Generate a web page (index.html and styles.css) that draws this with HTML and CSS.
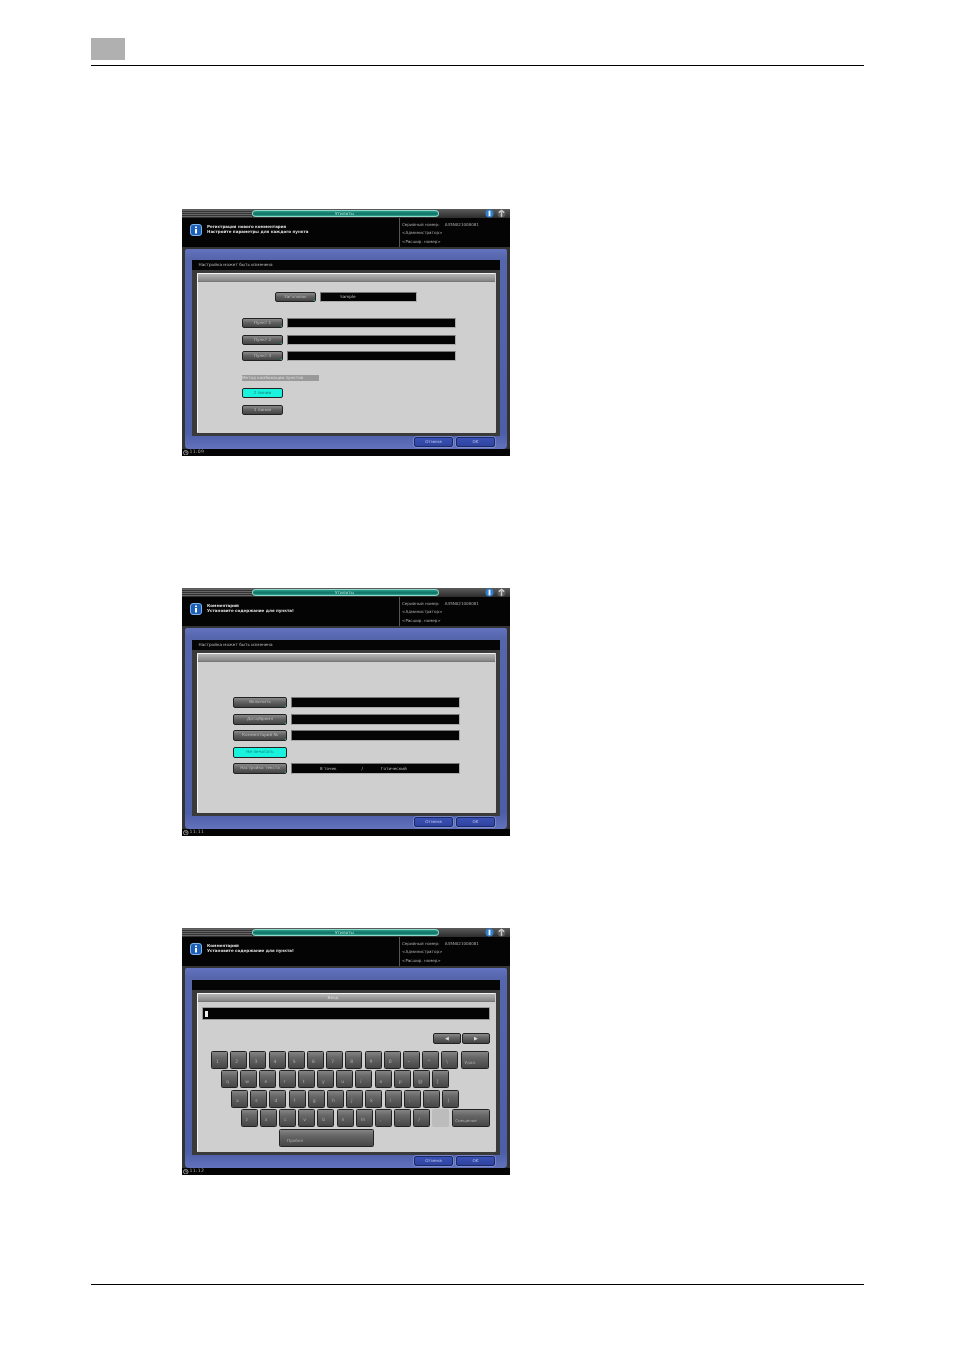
FILE: index.html
```html
<!DOCTYPE html>
<html lang="ru">
<head>
<meta charset="utf-8">
<title>Утилиты</title>
<link rel="stylesheet" href="styles.css">
</head>
<body>
<div class="page">
  <header class="page-head"><div class="chapter"></div></header>

  <section class="screen s1">
    <div class="topbar"><div class="stripes"></div><div class="pill">Утилиты</div><div class="top-icons"><svg class="ic" viewBox="0 0 10 10"><circle cx="5" cy="5" r="4.5" fill="#2f7fd0"/><rect x="4" y="2" width="2" height="6" fill="#fff"/></svg><svg class="ic" viewBox="0 0 10 10"><circle cx="5" cy="5" r="4.5" fill="#5c5c5c"/><path d="M2 4 L5 1.5 L8 4 M5 3 V8.5" stroke="#ccc" stroke-width="1.6" fill="none"/></svg></div></div>
    <div class="info">
      <svg class="info-ic" viewBox="0 0 12 12"><rect x=".5" y=".5" width="11" height="11" rx="2.5" fill="#1c5fb8" stroke="#7fb2ea"/><rect x="5" y="2.5" width="2" height="1.6" fill="#fff"/><rect x="5" y="5" width="2" height="4.5" fill="#fff"/></svg>
      <div class="msg"><p>Регистрация нового комментария</p><p>Настройте параметры для каждого пункта</p></div>
      <div class="meta"><p>Серийный номер: <span class="serial">A45N021008081</span></p><p>&lt;Администратор&gt;</p><p>&lt;Расшир. номер&gt;</p></div>
    </div>
    <div class="panel">
      <div class="title">Настройка может быть изменена</div>
      <div class="frame"><div class="content">
        <div class="strip"></div>
        <div class="row head-row"><div class="btn w41">Заголовок</div><div class="field w96 sample">Sample</div></div>
        <div class="group-a">
          <div class="row"><div class="btn w41">Пункт 1</div><div class="field w168"></div></div>
          <div class="row"><div class="btn w41">Пункт 2</div><div class="field w168"></div></div>
          <div class="row"><div class="btn w41">Пункт 3</div><div class="field w168"></div></div>
        </div>
        <div class="combo-label">Метод комбинации пунктов</div>
        <div class="combo">
          <div class="btn w41 on plain">2 линии</div>
          <div class="btn w41 plain">1 линия</div>
        </div>
      </div></div>
      <div class="foot"><div class="fbtn">Отмена</div><div class="fbtn">OK</div></div>
    </div>
    <div class="status"><svg class="clock" viewBox="0 0 6 6"><circle cx="3" cy="3" r="2.5" fill="none" stroke="#ccc" stroke-width=".8"/><path d="M3 1.5V3H4.5" stroke="#ccc" stroke-width=".7" fill="none"/></svg>11:09</div>
  </section>

  <section class="screen s2">
    <div class="topbar"><div class="stripes"></div><div class="pill">Утилиты</div><div class="top-icons"><svg class="ic" viewBox="0 0 10 10"><circle cx="5" cy="5" r="4.5" fill="#2f7fd0"/><rect x="4" y="2" width="2" height="6" fill="#fff"/></svg><svg class="ic" viewBox="0 0 10 10"><circle cx="5" cy="5" r="4.5" fill="#5c5c5c"/><path d="M2 4 L5 1.5 L8 4 M5 3 V8.5" stroke="#ccc" stroke-width="1.6" fill="none"/></svg></div></div>
    <div class="info">
      <svg class="info-ic" viewBox="0 0 12 12"><rect x=".5" y=".5" width="11" height="11" rx="2.5" fill="#1c5fb8" stroke="#7fb2ea"/><rect x="5" y="2.5" width="2" height="1.6" fill="#fff"/><rect x="5" y="5" width="2" height="4.5" fill="#fff"/></svg>
      <div class="msg"><p>Комментарий</p><p>Установите содержание для пункта!</p></div>
      <div class="meta"><p>Серийный номер: <span class="serial">A45N021008081</span></p><p>&lt;Администратор&gt;</p><p>&lt;Расшир. номер&gt;</p></div>
    </div>
    <div class="panel">
      <div class="title">Настройка может быть изменена</div>
      <div class="frame"><div class="content">
        <div class="strip"></div>
        <div class="group-b">
          <div class="row"><div class="btn w54">Включить</div><div class="field w168"></div></div>
          <div class="row"><div class="btn w54">Дата/Время</div><div class="field w168"></div></div>
          <div class="row"><div class="btn w54">Комментарий №</div><div class="field w168"></div></div>
          <div class="row"><div class="btn w54 on plain">Не печатать</div></div>
          <div class="row"><div class="btn w54">Настройка текста</div><div class="field w168 font-info"><span>8 точек</span><span>/</span><span>Готический</span></div></div>
        </div>
      </div></div>
      <div class="foot"><div class="fbtn">Отмена</div><div class="fbtn">OK</div></div>
    </div>
    <div class="status"><svg class="clock" viewBox="0 0 6 6"><circle cx="3" cy="3" r="2.5" fill="none" stroke="#ccc" stroke-width=".8"/><path d="M3 1.5V3H4.5" stroke="#ccc" stroke-width=".7" fill="none"/></svg>11:11</div>
  </section>

  <section class="screen s3">
    <div class="topbar"><div class="stripes"></div><div class="pill">Утилиты</div><div class="top-icons"><svg class="ic" viewBox="0 0 10 10"><circle cx="5" cy="5" r="4.5" fill="#2f7fd0"/><rect x="4" y="2" width="2" height="6" fill="#fff"/></svg><svg class="ic" viewBox="0 0 10 10"><circle cx="5" cy="5" r="4.5" fill="#5c5c5c"/><path d="M2 4 L5 1.5 L8 4 M5 3 V8.5" stroke="#ccc" stroke-width="1.6" fill="none"/></svg></div></div>
    <div class="info">
      <svg class="info-ic" viewBox="0 0 12 12"><rect x=".5" y=".5" width="11" height="11" rx="2.5" fill="#1c5fb8" stroke="#7fb2ea"/><rect x="5" y="2.5" width="2" height="1.6" fill="#fff"/><rect x="5" y="5" width="2" height="4.5" fill="#fff"/></svg>
      <div class="msg"><p>Комментарий</p><p>Установите содержание для пункта!</p></div>
      <div class="meta"><p>Серийный номер: <span class="serial">A45N021008081</span></p><p>&lt;Администратор&gt;</p><p>&lt;Расшир. номер&gt;</p></div>
    </div>
    <div class="panel">
      <div class="title"></div>
      <div class="frame"><div class="content">
        <div class="strip">Ввод</div>
        <div class="input"><span class="caret"></span></div>
        <div class="arrows"><div class="arrow">◀</div><div class="arrow">▶</div></div>
        <div class="keyboard">
          <div class="krow r1"><div class="key">1</div><div class="key">2</div><div class="key">3</div><div class="key">4</div><div class="key">5</div><div class="key">6</div><div class="key">7</div><div class="key">8</div><div class="key">9</div><div class="key">0</div><div class="key">-</div><div class="key">^</div><div class="key">\</div><div class="key wide">Удал.</div></div>
          <div class="krow r2"><div class="key">q</div><div class="key">w</div><div class="key">e</div><div class="key">r</div><div class="key">t</div><div class="key">y</div><div class="key">u</div><div class="key">i</div><div class="key">o</div><div class="key">p</div><div class="key">@</div><div class="key">[</div></div>
          <div class="krow r3"><div class="key">a</div><div class="key">s</div><div class="key">d</div><div class="key">f</div><div class="key">g</div><div class="key">h</div><div class="key">j</div><div class="key">k</div><div class="key">l</div><div class="key">;</div><div class="key">:</div><div class="key">]</div></div>
          <div class="krow r4"><div class="key">z</div><div class="key">x</div><div class="key">c</div><div class="key">v</div><div class="key">b</div><div class="key">n</div><div class="key">m</div><div class="key">,</div><div class="key">.</div><div class="key">/</div><div class="key blank"></div><div class="key shift">Смещение</div></div>
          <div class="krow r5"><div class="key space">Пробел</div></div>
        </div>
      </div></div>
      <div class="foot"><div class="fbtn">Отмена</div><div class="fbtn">OK</div></div>
    </div>
    <div class="status"><svg class="clock" viewBox="0 0 6 6"><circle cx="3" cy="3" r="2.5" fill="none" stroke="#ccc" stroke-width=".8"/><path d="M3 1.5V3H4.5" stroke="#ccc" stroke-width=".7" fill="none"/></svg>11:12</div>
  </section>

  <footer class="page-foot"></footer>
</div>
</body>
</html>
```
FILE: styles.css
```css
* { box-sizing: border-box; }
html, body { margin: 0; padding: 0; background: #fff; }
p { margin: 0; }
.page { width: 954px; height: 1350px; padding-top: 38px; overflow: hidden; font-family: "DejaVu Sans", sans-serif; }

.page-head { margin: 0 90px 0 91px; height: 28px; border-bottom: 1px solid #000; }
.chapter { width: 34px; height: 22px; background: #b0b0b0; }
.page-foot { margin: 109px 90px 0 91px; height: 1px; background: #000; }

.screen { width: 328px; margin-left: 182px; display: flex; flex-direction: column; background: #333; font-size: 4.2px; line-height: 1; color: #ccc; filter: blur(.35px); }
.s1 { height: 247px; margin-top: 143px; }
.s2 { height: 248px; margin-top: 132px; }
.s3 { height: 247px; margin-top: 92px; }

.topbar { height: 9px; display: flex; align-items: center; background: linear-gradient(#5c5c5c, #2c2c2c); flex: none; }
.stripes { width: 70px; height: 7px; background: repeating-linear-gradient(#666 0 1px, #333 1px 2px); }
.pill { width: 187px; height: 7px; border-radius: 4px / 3.5px; background: linear-gradient(#2a9c8b, #0d6f62 60%, #2fa593); border: 1px solid #8fd8ca; text-align: center; color: #bfe8df; font-size: 4.2px; line-height: 5px; padding-right: 2px; }
.top-icons { margin-left: 46px; display: flex; gap: 3px; }
.ic { width: 9px; height: 9px; display: block; }

.info { height: 29px; flex: none; background: #040404; display: flex; align-items: flex-start; }
.info-ic { width: 12px; height: 12px; margin: 6px 0 0 8px; flex: none; }
.msg { width: 192px; margin-left: 5px; padding-top: 5.5px; font-weight: bold; font-size: 4.05px; line-height: 5px; color: #ddd; }
.meta { width: 110px; height: 29px; border-left: 1px solid #555; padding: 2.5px 0 0 2px; color: #aaa; font-size: 4.05px; line-height: 8.5px; }
.serial { margin-left: 4px; }

.panel { flex: 1; margin: 2px 3px 0; display: flex; flex-direction: column; padding-top: 11px; background: linear-gradient(#6272bd, #5566ad 5%, #4d5ea8 92%, #6272bd); border-radius: 2px 2px 4px 4px; }
.s2 .panel, .s3 .panel { padding-top: 12px; }
.title { height: 10px; flex: none; margin: 0 7px; background: #050505; padding: 3px 0 0 6.5px; font-size: 4.2px; color: #bbb; }
.frame { flex: 1; margin: 0 7px; background: #3a3a3a; padding: 3px 4px 3px 5px; display: flex; }
.content { flex: 1; background: #cfcfcf; border: 1px solid #f4f4f4; border-width: 1px 0 0 1px; border-radius: 1px; display: flex; flex-direction: column; }
.strip { height: 8px; flex: none; margin: 0 1px 0 0; background: linear-gradient(#b5b5b5, #858585); border-bottom: 1px solid #777; text-align: center; color: #ddd; font-size: 4.2px; line-height: 7px; padding-right: 27px; }

.row { display: flex; gap: 4px; height: 10px; }
.head-row { margin: 10px 0 0 77px; }
.group-a { display: flex; flex-direction: column; gap: 6.5px; margin: 16px 0 0 44px; }
.combo-label { width: 77px; height: 6px; margin: 14px 0 0 44px; background: #999; color: #ddd; font-size: 4.15px; line-height: 6px; white-space: nowrap; }
.combo { display: flex; flex-direction: column; gap: 7px; margin: 7px 0 0 44px; }
.group-b { display: flex; flex-direction: column; gap: 5.5px; margin: 35px 0 0 35px; }
.group-b .row { height: 11px; }

.btn { height: 10px; flex: none; border: 1px solid #222; border-radius: 2px; background: linear-gradient(#8a8a8a, #626262 45%, #444); color: #bdbdbd; text-align: center; font-size: 4.2px; line-height: 7.5px; position: relative; white-space: nowrap; overflow: hidden; }
.group-b .btn { height: 11px; line-height: 8px; }
.btn::after { content: ""; position: absolute; right: 0; bottom: 0; border: 1.5px solid transparent; border-right-color: #1f9c7a; border-bottom-color: #1f9c7a; }
.btn.plain::after { display: none; }
.btn.on { background: #19f3dd; color: #157a70; }
.w41 { width: 41px; }
.w54 { width: 54px; }
.field { background: #040404; border-radius: 1px; border: 1px solid #888; border-color: #777 #aaa #aaa #777; color: #bbb; font-size: 4.2px; line-height: 8.5px; }
.w96 { width: 96.5px; }
.w168 { width: 168.5px; }
.sample { padding-left: 19px; }
.font-info { display: flex; padding-left: 28px; line-height: 9.5px; }
.font-info span:nth-child(2) { margin-left: 25px; }
.font-info span:nth-child(3) { margin-left: 18px; }

.input { height: 13px; width: 288px; flex: none; margin: 5px 0 0 3.5px; background: #040404; border: 1px solid #999; border-radius: 1px; padding: 3px 0 0 2px; }
.caret { display: block; width: 3px; height: 6px; background: #eee; }
.arrows { display: flex; justify-content: flex-end; gap: 1px; margin: 13px 6px 0 0; }
.arrow { width: 28px; height: 11px; border: 1px solid #222; border-radius: 2px; background: linear-gradient(#8a8a8a, #626262 45%, #444); color: #ddd; text-align: center; font-size: 5px; line-height: 9px; }
.keyboard { display: flex; flex-direction: column; gap: 1.25px; margin-top: 7px; }
.krow { display: flex; gap: 2.2px; height: 18px; }
.r1 { margin-left: 13px; }
.r2 { margin-left: 23px; }
.r3 { margin-left: 33px; }
.r4 { margin-left: 42.6px; }
.r5 { margin-left: 81px; margin-top: 1px; }
.key { width: 17px; height: 18px; flex: none; border: 1px solid #222; border-radius: 1.5px; background: linear-gradient(#848484, #666 35%, #474747); color: #adadad; font-size: 4.6px; line-height: 1; display: flex; align-items: flex-end; padding: 0 0 3px 4px; }
.key.wide { width: 28px; margin-left: 1px; font-size: 4.2px; padding-left: 2px; }
.key.blank { background: #bcbcbc; border-color: #bcbcbc; }
.key.shift { width: 38px; margin-left: .5px; font-size: 3.9px; padding-left: 2px; }
.key.space { width: 95px; padding-left: 7px; font-size: 4.2px; }

.foot { height: 13px; flex: none; display: flex; justify-content: flex-end; gap: 3px; padding: 1px 12px 0 0; }
.fbtn { width: 39px; height: 10px; border: 1px solid #1b2a66; border-radius: 2px; background: linear-gradient(#3a52b5, #2f43a0); box-shadow: 0 0 0 .5px #9aa8dc; color: #bcc5ea; text-align: center; font-size: 4.1px; line-height: 8px; }

.status { height: 7px; flex: none; background: #040404; color: #aaa; display: flex; align-items: center; gap: 1px; font-size: 4.6px; letter-spacing: .3px; padding-left: 1px; }
.clock { width: 5.5px; height: 5.5px; }
```
